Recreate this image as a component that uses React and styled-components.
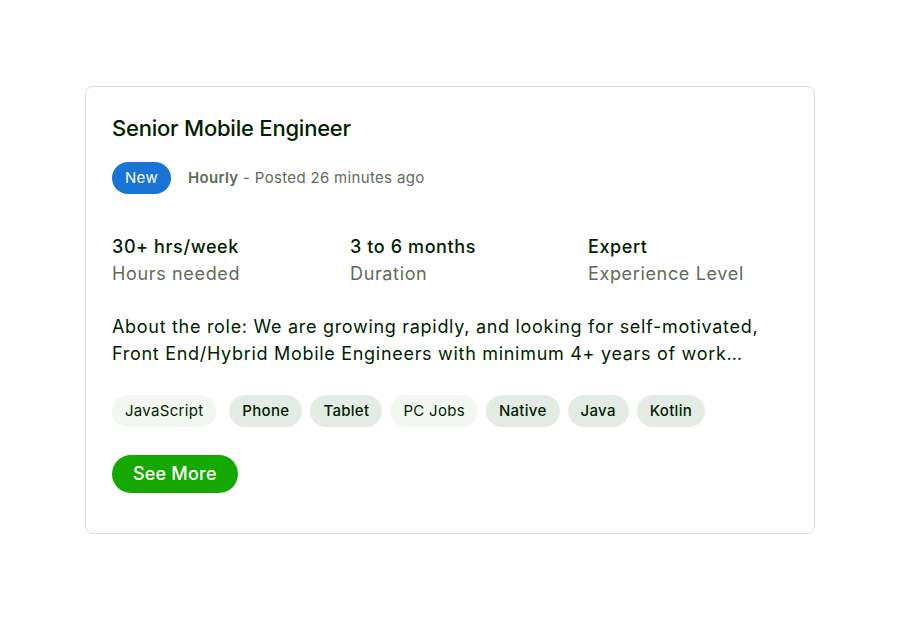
import styled, { createGlobalStyle } from "styled-components";

const GlobalStyle = createGlobalStyle`
    html, body {
        margin: 0;
        padding: 0;
        background: #ffffff;
    }

    body {
        font-family: Inter, "Liberation Sans", Arial, sans-serif;
        color: #001e00;
    }
`;

const Page = styled.div`
    width: 100vw;
    height: 100vh;
    display: flex;
    align-items: center;
    justify-content: center;
`;

const Card = styled.article`
    box-sizing: border-box;
    width: 730px;
    padding: 27px 26px 40px;
    border: 1px solid #d5e0d5;
    border-radius: 8px;
    background: #ffffff;

    display: flex;
    flex-direction: column;
    align-items: flex-start;
`;

const Title = styled.h2`
    margin: 0;
    font-size: 22px;
    line-height: 28px;
    font-weight: 500;
    letter-spacing: -0.01em;
    color: #001e00;
`;

const MetaRow = styled.div`
    margin-top: 20px;
    display: flex;
    align-items: center;
    gap: 17px;
`;

const Badge = styled.span`
    display: inline-flex;
    align-items: center;
    justify-content: center;
    height: 32px;
    padding: 0 13px;
    border-radius: 16px;
    background: #1a74d6;
    color: #ffffff;
    font-size: 15px;
    letter-spacing: 0.3px;
`;

const Meta = styled.span`
    font-size: 15px;
    letter-spacing: 0.33px;
    color: #5e6d55;

    strong {
        font-weight: 600;
    }
`;

const Stats = styled.div`
    margin-top: 39px;
    width: 100%;
    display: grid;
    grid-template-columns: repeat(3, 238px);
`;

const Stat = styled.div`
    display: flex;
    flex-direction: column;
`;

const StatValue = styled.span`
    font-size: 18px;
    line-height: 27px;
    font-weight: 500;
    letter-spacing: 0.6px;
    color: #001e00;
`;

const StatLabel = styled.span`
    font-size: 18px;
    line-height: 27px;
    letter-spacing: 0.65px;
    color: #5e6d55;
`;

const Description = styled.p`
    margin: 26px 0 0;
    font-size: 18px;
    line-height: 27px;
    letter-spacing: 0.7px;
    color: #001e00;
    max-width: 660px;
    display: -webkit-box;
    -webkit-line-clamp: 2;
    -webkit-box-orient: vertical;
    overflow: hidden;
`;

const Tags = styled.div`
    margin-top: 28px;
    display: flex;
    flex-wrap: wrap;
    gap: 8px;
`;

const Tag = styled.span`
    display: inline-flex;
    align-items: center;
    height: 32px;
    padding: 0 13px;
    margin-right: ${(p) => (p.$spaced ? "5px" : "0")};
    border-radius: 16px;
    font-size: 15px;
    letter-spacing: 0.3px;
    font-weight: ${(p) => (p.$strong ? 500 : 400)};
    background: ${(p) => (p.$strong ? "#e4ebe4" : "#f2f7f2")};
    color: #001e00;
`;

const SeeMore = styled.button`
    margin-top: 28px;
    height: 38px;
    padding: 0 21px;
    border: none;
    border-radius: 19px;
    background: #14a800;
    color: #ffffff;
    font-family: inherit;
    font-size: 18px;
    font-weight: 500;
    letter-spacing: 0.2px;
    cursor: pointer;
`;

const stats = [
    { value: "30+ hrs/week", label: "Hours needed" },
    { value: "3 to 6 months", label: "Duration" },
    { value: "Expert", label: "Experience Level" },
];

const tags = [
    { name: "JavaScript", strong: false, spaced: true },
    { name: "Phone", strong: true },
    { name: "Tablet", strong: true },
    { name: "PC Jobs", strong: false },
    { name: "Native", strong: true },
    { name: "Java", strong: true },
    { name: "Kotlin", strong: true },
];

export default function App() {
    return (
        <>
            <GlobalStyle />
            <Page>
                <Card>
                    <Title>Senior Mobile Engineer</Title>
                    <MetaRow>
                        <Badge>New</Badge>
                        <Meta>
                            <strong>Hourly</strong> - Posted 26 minutes ago
                        </Meta>
                    </MetaRow>
                    <Stats>
                        {stats.map((s) => (
                            <Stat key={s.label}>
                                <StatValue>{s.value}</StatValue>
                                <StatLabel>{s.label}</StatLabel>
                            </Stat>
                        ))}
                    </Stats>
                    <Description>
                        About the role: We are growing rapidly, and looking for
                        self-motivated, Front End/Hybrid Mobile Engineers with
                        minimum 4+ years of work experience building
                        production apps for iOS and Android.
                    </Description>
                    <Tags>
                        {tags.map((t) => (
                            <Tag
                                key={t.name}
                                $strong={t.strong}
                                $spaced={t.spaced}
                            >
                                {t.name}
                            </Tag>
                        ))}
                    </Tags>
                    <SeeMore>See More</SeeMore>
                </Card>
            </Page>
        </>
    );
}
